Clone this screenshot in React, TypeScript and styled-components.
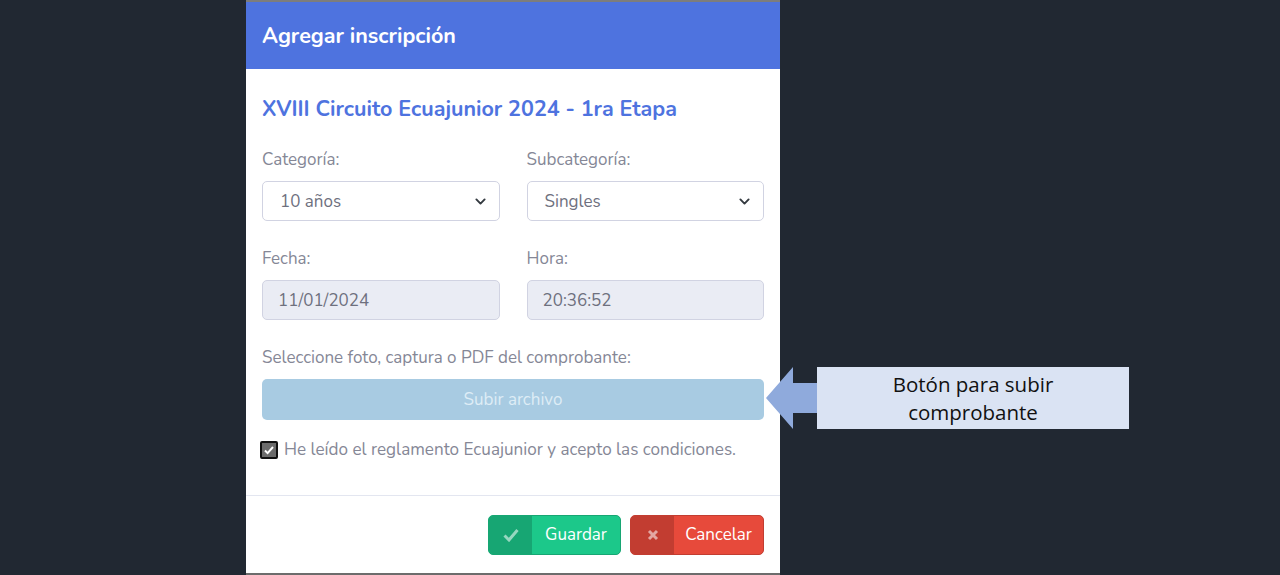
import styled, { createGlobalStyle } from 'styled-components';

const GlobalStyle = createGlobalStyle`
  html, body {
    margin: 0;
    padding: 0;
    background: #212832;
  }
  * { box-sizing: border-box; }
`;

const Page = styled.div`
  position: relative;
  width: 1280px;
  height: 575px;
  overflow: hidden;
  background: #212832;
  padding-left: 246px;
  font-family: "Nunito", "Lato", "Noto Sans", sans-serif;
`;

const Modal = styled.div`
  width: 534px;
  height: 575px;
  background: #fff;
  border-top: 2px solid #7d7d7d;
  border-bottom: 2px solid #6c6c6c;
  display: flex;
  flex-direction: column;
`;

const Header = styled.div`
  height: 67px;
  background: #4e73df;
  display: flex;
  align-items: center;
  padding: 0 16px;
`;

const Title = styled.h5`
  margin: 0;
  color: #fff;
  font-size: 21.5px;
  font-weight: 700;
`;

const Body = styled.div`
  padding: 26px 16px 0;
  flex: 1;
`;

const EventName = styled.h4`
  margin: 0 0 26px;
  color: #4e73df;
  font-size: 21.5px;
  font-weight: 700;
  line-height: 28px;
`;

const Row = styled.div`
  display: grid;
  grid-template-columns: 1fr 1fr;
  column-gap: 27px;
  margin-bottom: 27px;
`;

const Field = styled.div`
  display: flex;
  flex-direction: column;
`;

const Label = styled.label`
  color: #858796;
  font-size: 17px;
  line-height: 22px;
  margin-bottom: 10px;
`;

const Control = styled.div<{ $disabled?: boolean }>`
  height: 40px;
  border: 1px solid #d1d3e2;
  border-radius: 5px;
  background: ${p => (p.$disabled ? '#eaecf4' : '#fff')};
  color: #6e707e;
  font-size: 17px;
  display: flex;
  align-items: center;
  justify-content: space-between;
  padding: 0 13px 0 ${p => (p.$disabled ? '15px' : '17px')};
`;

const UploadButton = styled.div`
  height: 41px;
  border-radius: 5px;
  background: #a8cbe2;
  color: #deedf6;
  font-size: 17px;
  display: flex;
  align-items: center;
  justify-content: center;
  margin-bottom: 19px;
`;

const CheckRow = styled.div`
  display: flex;
  align-items: center;
  gap: 6px;
  margin-left: -2px;
  color: #858796;
  font-size: 17.1px;
  line-height: 22px;
`;

const CheckBox = styled.span`
  width: 18px;
  height: 18px;
  border: 2px solid #111;
  border-radius: 2px;
  background: #6b6b6b;
  display: flex;
  align-items: center;
  justify-content: center;
`;

const Footer = styled.div`
  border-top: 1px solid #e3e6f0;
  height: 78px;
  display: flex;
  align-items: center;
  justify-content: flex-end;
  gap: 9px;
  padding: 0 16px 0;
`;

const SplitButton = styled.div<{ $main: string; $dark: string }>`
  height: 40px;
  border-radius: 5px;
  overflow: hidden;
  display: flex;
  background: ${p => p.$main};
  color: #fff;
  font-size: 17px;
  border: 1px solid ${p => p.$dark};
`;

const IconPart = styled.span<{ $dark: string }>`
  width: 43px;
  background: ${p => p.$dark};
  display: flex;
  align-items: center;
  justify-content: center;
`;

const TextPart = styled.span<{ $width: number }>`
  width: ${p => p.$width}px;
  display: flex;
  align-items: center;
  justify-content: center;
`;

const Annotation = styled.div`
  position: absolute;
  left: 766px;
  top: 367px;
  display: flex;
  align-items: center;
`;

const Callout = styled.div`
  width: 312px;
  height: 62px;
  background: #dae3f3;
  color: #111;
  font-family: "Open Sans", "Noto Sans", sans-serif;
  font-size: 20.5px;
  line-height: 28px;
  text-align: center;
  display: flex;
  align-items: center;
  justify-content: center;
  margin-left: -1px;
`;

const Chevron = () => (
  <svg width="11" height="11" viewBox="0 0 16 16">
    <path d="M2 5l6 6 6-6" fill="none" stroke="#343a40" strokeWidth="2.8" strokeLinecap="round" strokeLinejoin="round" />
  </svg>
);

export default function App() {
  return (
    <>
      <GlobalStyle />
      <Page>
        <Modal>
          <Header>
            <Title>Agregar inscripción</Title>
          </Header>
          <Body>
            <EventName>XVIII Circuito Ecuajunior 2024 - 1ra Etapa</EventName>
            <Row>
              <Field>
                <Label>Categoría:</Label>
                <Control>
                  10 años
                  <Chevron />
                </Control>
              </Field>
              <Field>
                <Label>Subcategoría:</Label>
                <Control>
                  Singles
                  <Chevron />
                </Control>
              </Field>
            </Row>
            <Row>
              <Field>
                <Label>Fecha:</Label>
                <Control $disabled>11/01/2024</Control>
              </Field>
              <Field>
                <Label>Hora:</Label>
                <Control $disabled>20:36:52</Control>
              </Field>
            </Row>
            <Label as="div">Seleccione foto, captura o PDF del comprobante:</Label>
            <UploadButton>Subir archivo</UploadButton>
            <CheckRow>
              <CheckBox>
                <svg width="12" height="12" viewBox="0 0 12 12">
                  <path d="M2 6.5l2.6 2.6L10 3" fill="none" stroke="#fff" strokeWidth="2" />
                </svg>
              </CheckBox>
              He leído el reglamento Ecuajunior y acepto las condiciones.
            </CheckRow>
          </Body>
          <Footer>
            <SplitButton $main="#1cc88a" $dark="#17a673">
              <IconPart $dark="#17a673">
                <svg width="16" height="14" viewBox="0 0 16 14">
                  <path d="M1.5 7.5l4.5 4.5L14.5 2" fill="none" stroke="rgba(255,255,255,0.55)" strokeWidth="3" />
                </svg>
              </IconPart>
              <TextPart $width={88}>Guardar</TextPart>
            </SplitButton>
            <SplitButton $main="#e74a3b" $dark="#c23d31">
              <IconPart $dark="#c23d31">
                <svg width="12" height="12" viewBox="0 0 12 12">
                  <path d="M2 2l8 8M10 2l-8 8" fill="none" stroke="rgba(255,255,255,0.55)" strokeWidth="3" />
                </svg>
              </IconPart>
              <TextPart $width={89}>Cancelar</TextPart>
            </SplitButton>
          </Footer>
        </Modal>
        <Annotation>
          <svg width="52" height="62" viewBox="0 0 52 62">
            <path d="M0 31L27 0V16H52V46H27V62Z" fill="#8faadc" />
          </svg>
          <Callout>
            Botón para subir
            <br />
            comprobante
          </Callout>
        </Annotation>
      </Page>
    </>
  );
}
